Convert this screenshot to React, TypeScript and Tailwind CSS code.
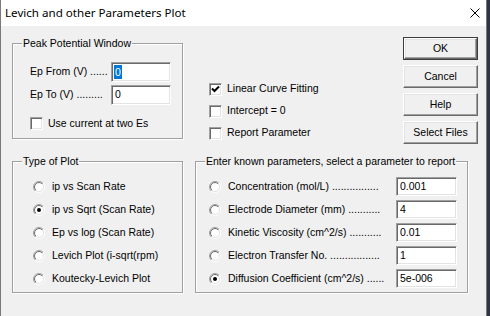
import { useId } from 'react';

const sunken =
  'border border-t-[#a0a0a0] border-l-[#a0a0a0] border-r-white border-b-white shadow-[inset_1px_1px_0_#696969,inset_-1px_-1px_0_#e3e3e3] bg-white';

function GroupBox({
  label,
  className,
  children,
}: {
  label: string;
  className: string;
  children: React.ReactNode;
}) {
  return (
    <div
      className={`relative border border-[#a0a0a0] shadow-[1px_1px_0_#fff,inset_1px_1px_0_#fff] ${className}`}
    >
      <span className="absolute left-[9px] top-[-8px] bg-[#f0f0f0] px-[1px] leading-[14px] whitespace-nowrap">
        {label}
      </span>
      {children}
    </div>
  );
}

function Checkbox({ checked, label }: { checked?: boolean; label: string }) {
  return (
    <div className="flex items-center whitespace-nowrap">
      <div className={`w-[13px] h-[13px] ${sunken} flex items-center justify-center`}>
        {checked && (
          <svg width="9" height="9" viewBox="0 0 9 9">
            <path d="M1 3.5 L3.5 6 L8 1.5" stroke="#000" strokeWidth="2" fill="none" />
          </svg>
        )}
      </div>
      <span className="ml-[5px]">{label}</span>
    </div>
  );
}

function Radio({ checked }: { checked?: boolean }) {
  const id = useId().replace(/:/g, '');
  return (
    <svg width="12" height="12" viewBox="0 0 12 12" className="shrink-0">
      <defs>
        <linearGradient id={`o${id}`} x1="0" y1="0" x2="1" y2="1">
          <stop offset="0.5" stopColor="#a0a0a0" />
          <stop offset="0.5" stopColor="#ffffff" />
        </linearGradient>
        <linearGradient id={`i${id}`} x1="0" y1="0" x2="1" y2="1">
          <stop offset="0.5" stopColor="#696969" />
          <stop offset="0.5" stopColor="#e3e3e3" />
        </linearGradient>
      </defs>
      <circle cx="6" cy="6" r="5.5" fill="none" stroke={`url(#o${id})`} />
      <circle cx="6" cy="6" r="4.5" fill="#fff" stroke={`url(#i${id})`} />
      {checked && <circle cx="6" cy="6" r="2" fill="#000" />}
    </svg>
  );
}

function Button({ label, isDefault }: { label: string; isDefault?: boolean }) {
  return (
    <div className={`w-[75px] h-[23px] ${isDefault ? 'border border-[#3c3c3c]' : ''}`}>
      <div className="w-full h-full flex items-center justify-center bg-[#f0f0f0] border border-t-white border-l-white border-r-[#696969] border-b-[#696969] shadow-[inset_-1px_-1px_0_#a0a0a0,inset_1px_1px_0_#e3e3e3]">
        {label}
      </div>
    </div>
  );
}

const plotTypes = [
  'ip vs Scan Rate',
  'ip vs Sqrt (Scan Rate)',
  'Ep vs log (Scan Rate)',
  'Levich Plot (i-sqrt(rpm)',
  'Koutecky-Levich Plot',
];

const params = [
  { label: 'Concentration (mol/L) ................', value: '0.001' },
  { label: 'Electrode Diameter (mm) ...........', value: '4' },
  { label: 'Kinetic Viscosity (cm^2/s) ...........', value: '0.01' },
  { label: 'Electron Transfer No. .................', value: '1' },
  { label: 'Diffusion Coefficient (cm^2/s) ......', value: '5e-006', checked: true },
];

export default function App() {
  return (
    <div className="w-[490px] h-[316px] flex bg-[#2e3448] overflow-hidden">
      <div className="w-[487px] h-full flex flex-col border-l border-r border-[#7a7a7a] bg-[#f0f0f0] text-[10.5px] text-black font-['Liberation_Sans',Arial,sans-serif]">
        {/* title bar */}
        <div className="h-[26px] shrink-0 bg-white flex items-center justify-between pl-[4px] pr-[6px]">
          <span className="text-[11.6px] font-['Noto_Sans',sans-serif]">
            Levich and other Parameters Plot
          </span>
          <svg width="10" height="10" viewBox="0 0 10 10">
            <path d="M0.5 0.5 L9.5 9.5 M9.5 0.5 L0.5 9.5" stroke="#000" strokeWidth="1" />
          </svg>
        </div>

        {/* top row */}
        <div className="h-[135px] shrink-0 flex items-start pt-[11px] pl-[11px]">
          <GroupBox label="Peak Potential Window" className="mt-[6px] w-[171px] h-[96px] pt-[18px] pl-[17px]">
            <div className="flex items-center h-[20px] whitespace-nowrap">
              <span className="w-[81px]">Ep From (V) ......</span>
              <div className={`w-[60px] h-[20px] ${sunken} flex items-center pl-[2px]`}>
                <span className="bg-[#0078d7] text-white px-[1px] leading-[14px]">0</span>
              </div>
            </div>
            <div className="flex items-center h-[20px] mt-[3px] whitespace-nowrap">
              <span className="w-[81px]">Ep To (V) .........</span>
              <div className={`w-[60px] h-[20px] ${sunken} flex items-center pl-[3px]`}>0</div>
            </div>
            <div className="mt-[11px]">
              <Checkbox label="Use current at two Es" />
            </div>
          </GroupBox>

          <div className="ml-[26px] mt-[41px] flex flex-col">
            <div className="h-[22px] flex items-center">
              <Checkbox checked label="Linear Curve Fitting" />
            </div>
            <div className="h-[22px] flex items-center">
              <Checkbox label="Intercept = 0" />
            </div>
            <div className="h-[22px] flex items-center">
              <Checkbox label="Report Parameter" />
            </div>
          </div>

          <div className="ml-auto mr-[8px] flex flex-col gap-[5px]">
            <Button label="OK" isDefault />
            <Button label="Cancel" />
            <Button label="Help" />
            <Button label="Select Files" />
          </div>
        </div>

        {/* bottom row */}
        <div className="flex items-start pl-[11px]">
          <GroupBox label="Type of Plot" className="w-[171px] h-[132px] pt-[13px] pl-[20px]">
            {plotTypes.map((t, i) => (
              <div key={t} className="h-[23px] flex items-center whitespace-nowrap">
                <Radio checked={i === 1} />
                <span className="ml-[7px]">{t}</span>
              </div>
            ))}
          </GroupBox>

          <GroupBox
            label="Enter known parameters, select a parameter to report"
            className="ml-[12px] w-[273px] h-[132px] pt-[13px] pl-[13px]"
          >
            {params.map((p) => (
              <div key={p.label} className="h-[23px] flex items-center">
                <Radio checked={p.checked} />
                <span className="ml-[7px] w-[168px] whitespace-nowrap overflow-hidden">{p.label}</span>
                <div className={`w-[61px] h-[19px] ${sunken} flex items-center pl-[3px]`}>{p.value}</div>
              </div>
            ))}
          </GroupBox>
        </div>
      </div>
    </div>
  );
}
